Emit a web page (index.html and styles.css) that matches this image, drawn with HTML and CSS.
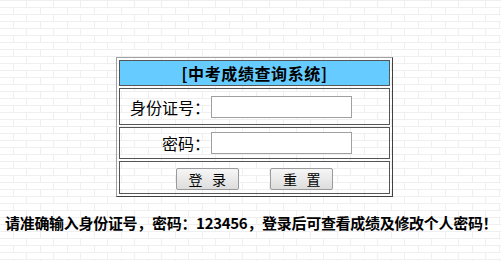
FILE: index.html
```html
<!DOCTYPE html>
<html lang="zh-CN">
<head>
    <meta charset="UTF-8">
    <title>中考成绩查询系统</title>
    <link rel="stylesheet" href="styles.css">
</head>
<body>
    <div class="page">
        <form class="login-form">
            <table class="login-table">
                <tr>
                    <td class="title">[中考成绩查询系统]</td>
                </tr>
                <tr>
                    <td class="field-row id-row">
                        <label for="sfzh">身份证号：</label><input type="text" id="sfzh">
                    </td>
                </tr>
                <tr>
                    <td class="field-row pwd-row">
                        <label for="mima">密码：</label><input type="password" id="mima">
                    </td>
                </tr>
                <tr>
                    <td class="buttons">
                        <button type="submit">登&nbsp;&nbsp;&nbsp;录</button>
                        <button type="reset">重&nbsp;&nbsp;&nbsp;置</button>
                    </td>
                </tr>
            </table>
        </form>

        <p class="notice">请准确输入身份证号，密码：123456，登录后可查看成绩及修改个人密码！</p>
    </div>
</body>
</html>
```

FILE: styles.css
```css
* {
    margin: 0;
    padding: 0;
    box-sizing: border-box;
}

body {
    font-family: "Noto Sans CJK SC", "Liberation Sans", sans-serif;
    background-color: #fff;
    background-image: url("data:image/svg+xml,%3Csvg xmlns='http://www.w3.org/2000/svg' width='27' height='14'%3E%3Cpath d='M0 0.5H27M0 7.5H27M26.5 1V7M13.5 8V14' stroke='%23efefef' stroke-width='1' fill='none'/%3E%3C/svg%3E");
    color: #000;
}

.page {
    padding-top: 57px;
}

.login-form {
    display: flex;
    justify-content: center;
    padding-left: 8px;
}

.login-table {
    width: 277px;
    border-collapse: separate;
    border-spacing: 2px;
    border: 1px solid;
    border-color: #a0a0a0 #404040 #404040 #a0a0a0;
}

.login-table td {
    border: 1px solid #555;
}

.title {
    height: 26px;
    background-color: #66ccff;
    text-align: center;
    font-size: 16px;
    font-weight: bold;
    letter-spacing: 0.6px;
    line-height: 22px;
}

.field-row {
    display: flex;
    align-items: center;
}

.id-row {
    height: 37px;
}

.pwd-row {
    height: 32px;
}

.field-row label {
    width: 90px;
    text-align: right;
    font-size: 16px;
    line-height: 20px;
}

.field-row input {
    width: 141px;
    height: 22px;
    margin-left: 1px;
    border: 1px solid #a0a0a0;
    background: #fff;
    font-size: 13px;
}

.buttons {
    height: 33px;
    text-align: center;
    vertical-align: middle;
}

.buttons button {
    width: 63px;
    height: 22px;
    margin: 0 14px;
    border: 1px solid #9a9a9a;
    border-radius: 2px;
    background: linear-gradient(#f6f6f6, #dddddd);
    font-family: "Noto Sans CJK SC", sans-serif;
    font-size: 14px;
    line-height: 20px;
    color: #000;
}

.notice {
    margin-top: 15px;
    padding-left: 5px;
    font-size: 15px;
    font-weight: bold;
    letter-spacing: -0.3px;
    white-space: nowrap;
}
```
